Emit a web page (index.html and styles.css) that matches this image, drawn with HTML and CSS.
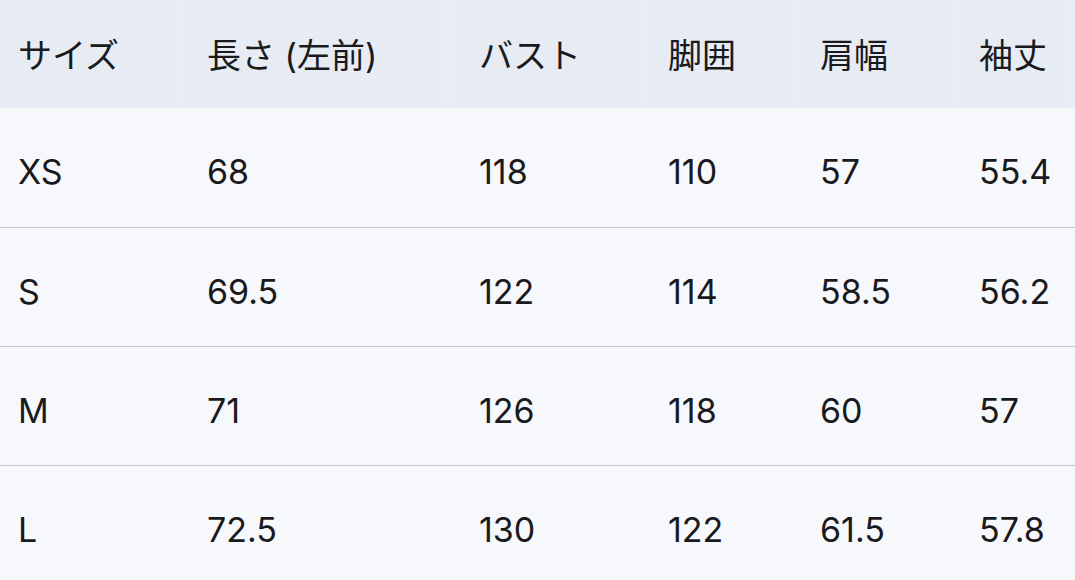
FILE: index.html
```html
<!DOCTYPE html>
<html lang="ja">
<head>
<meta charset="utf-8">
<link rel="stylesheet" href="styles.css">
</head>
<body>
<table class="size-table">
  <thead>
    <tr>
      <th class="c1">サイズ</th>
      <th class="c2">長さ (左前)</th>
      <th class="c3">バスト</th>
      <th class="c4">脚囲</th>
      <th class="c5">肩幅</th>
      <th class="c6">袖丈</th>
    </tr>
  </thead>
  <tbody>
    <tr><td>XS</td><td>68</td><td>118</td><td>110</td><td>57</td><td>55.4</td></tr>
    <tr><td>S</td><td>69.5</td><td>122</td><td>114</td><td>58.5</td><td>56.2</td></tr>
    <tr><td>M</td><td>71</td><td>126</td><td>118</td><td>60</td><td>57</td></tr>
    <tr><td>L</td><td>72.5</td><td>130</td><td>122</td><td>61.5</td><td>57.8</td></tr>
  </tbody>
</table>
</body>
</html>
```
FILE: styles.css
```css
html, body {
  margin: 0;
  padding: 0;
  background: #ffffff;
}
body {
  overflow: hidden;
  font-family: "Inter", "Noto Sans CJK JP", sans-serif;
  color: #1a1a1c;
}
.size-table {
  width: 1075px;
  border-collapse: collapse;
  table-layout: fixed;
  background: #f7f8fc;
  font-size: 34px;
}
.size-table th,
.size-table td {
  text-align: left;
  padding: 0 0 0 18px;
  white-space: nowrap;
  line-height: 40px;
}
.size-table th {
  height: 108px;
  font-weight: 400;
  background: linear-gradient(90deg, #e6ebf4 0%, #e8ecf4 100%);
  padding-top: 4px;
  box-sizing: border-box;
}
.size-table td {
  height: 119px;
  padding-top: 10px;
  box-sizing: border-box;
}
.size-table tbody tr + tr td {
  border-top: 1px solid #c6c6cb;
}
.c1 { width: 189px; }
.c2 { width: 272px; }
.c3 { width: 189px; }
.c4 { width: 152px; }
.c5 { width: 159px; }
.c6 { width: auto; }
```
